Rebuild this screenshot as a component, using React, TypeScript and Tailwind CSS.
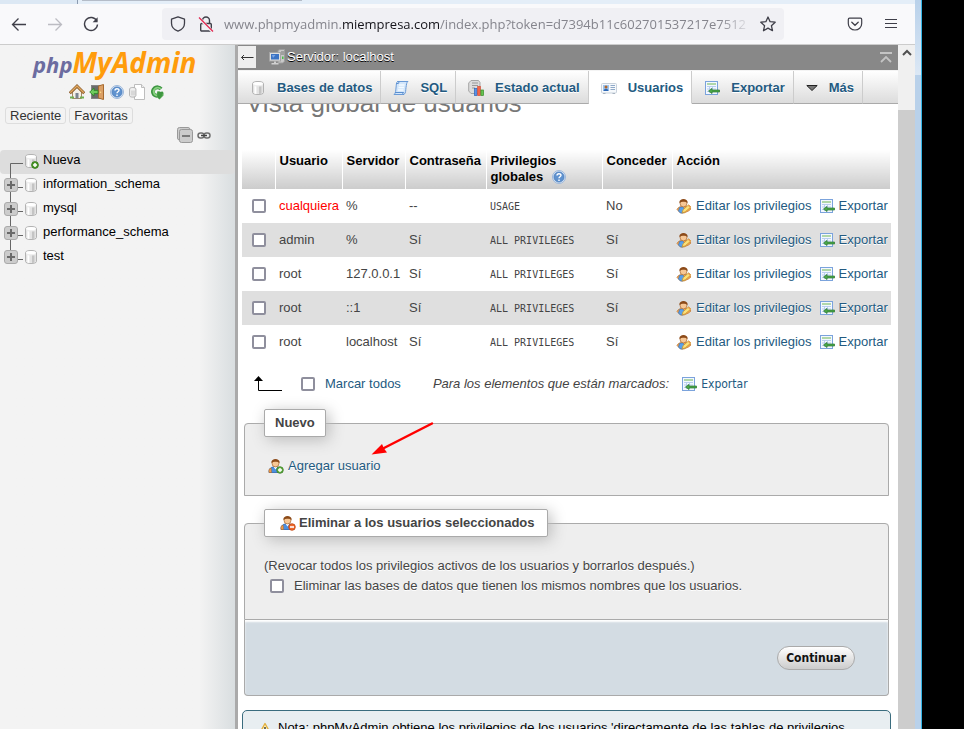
import type { ReactNode } from "react";

const linkClass = "text-[#235a81] no-underline hover:underline [text-shadow:0_1px_0_#fff]";
const checkboxClass =
  "h-[14px] w-[14px] shrink-0 appearance-none rounded-[2px] border-2 border-[#8f8f9d] bg-white checked:bg-[#0061e0]";

function Svg({ children, size = "h-4 w-4", box = "0 0 16 16" }: { children: ReactNode; size?: string; box?: string }) {
  return (
    <svg className={`${size} block shrink-0`} viewBox={box} fill="none" aria-hidden="true">
      {children}
    </svg>
  );
}

function DatabaseIcon({ add = false }: { add?: boolean }) {
  return (
    <Svg>
      <path d="M2.5 3.5C2.5 .8 13.5.8 13.5 3.5v9c0 2.7-11 2.7-11 0z" fill="#efefef" stroke="#b2b2b2" />
      <path d="M3 5.2c2 1.5 8 1.5 10 0v7.3c-2 1.7-8 1.7-10 0z" fill="#e3e3e3" />
      <path d="M9 6.4h2.4v7.3L9 14z" fill="#c4c4c4" />
      <path d="M4.4 6.1l2 .4v7.4l-2-.5z" fill="#fff" />
      <ellipse cx="8" cy="3.6" rx="4.8" ry="1.5" fill="#fff" />
      {add && (
        <>
          <circle cx="12" cy="12" r="3.4" fill="#4c9a2a" stroke="#2f7514" strokeWidth=".8" />
          <path d="M12 10v4M10 12h4" stroke="#fff" strokeWidth="1.5" />
        </>
      )}
    </Svg>
  );
}

function HomeIcon() {
  return (
    <Svg>
      <path d="M3.5 8L8 3.5 12.5 8v6.5h-9z" fill="#f4efe6" stroke="#a58a63" />
      <path d="M.8 9.2L8 2l7.2 7.2" stroke="#8a5a2a" strokeWidth="2.8" />
      <path d="M1.2 8.8L8 2.1l6.800 6.700" stroke="#e0a860" strokeWidth="1.400" />
      <rect x="6.500" y="9" width="3" height="5.500" fill="#7b8490" />
      <path d="M1 13.500h4M11 13.500h4" stroke="#6fae52" strokeWidth="2" />
    </Svg>
  );
}

function ExitIcon() {
  return (
    <Svg>
      <rect x="2.5" y="1.5" width="9" height="13" fill="#6b6b6b" stroke="#858585" />
      <path d="M9.5 2l5-1.5v15l-5-1.5z" fill="#dba066" stroke="#a66a30" />
      <circle cx="11.500" cy="8.300" r=".8" fill="#ffe08a" />
      <path d="M.7 8L5 4v2.400h4v3.200H5V12z" fill="#6fcb5e" stroke="#2f8a2a" strokeWidth=".9" />
    </Svg>
  );
}

function HelpIcon() {
  return (
    <Svg>
      <circle cx="8" cy="8" r="6.500" fill="#d5e3f5" stroke="#9db8da" />
      <circle cx="8" cy="8" r="5" fill="#5f92cf" stroke="#4a7dbd" strokeWidth=".8" />
      <path d="M6 6.600c0-2.600 4-2.400 4-.3C10 7.800 8 7.800 8 9.200M8 10.400v1.500" stroke="#fff" strokeWidth="1.400" />
    </Svg>
  );
}

function DocsIcon() {
  return (
    <Svg>
      <path d="M5.5.5h7l3 3v12h-10z" fill="#fff" stroke="#bdbdbd" />
      <path d="M12.5.5v3h3" fill="#eee" stroke="#bdbdbd" />
      <path d="M.6 5c0-2 6.3-2 6.3 0v6.6c0 2-6.300 2-6.300 0z" fill="#f0f0f0" stroke="#b0b0b0" />
      <path d="M3 6.500v5M5 6.500v5" stroke="#c0c0c0" />
    </Svg>
  );
}

function RefreshIcon() {
  return (
    <Svg>
      <path d="M12 5C10.500 3 7.500 2.600 5.500 4.300 2.500 7 4 12.200 8.600 11.700" stroke="#3c9440" strokeWidth="3.800" />
      <path d="M11.700 4.900C10.300 3.500 7.700 3.200 6 4.700 3.500 7 4.700 11.600 8.600 11.500" stroke="#86d07e" strokeWidth="1.900" />
      <path d="M8.200 7.200h2.600v1.400h3.700v2.900l-4 4-2.300-2.300z" fill="#55ab50" />
      <path d="M8.300 8.200l5.400-.8.600 1.800-1.400 1v1.600l-2.600 3.400-2-2.400z" fill="#3f9640" />
    </Svg>
  );
}

function SqlIcon() {
  return (
    <Svg>
      <path d="M4.500 1.500h10.500c-1.600 1-1.400 3-2 6-.5 3 .2 5-2 7H1c2-1.300 1.600-4 2-6.500.4-3 .1-5.500 1.500-6.500z" fill="#d3e6fa" stroke="#6a9ad6" />
      <path d="M4.500 1.500c1.800.2 1.500 2 .9 2h-2M11 14.500c-1.600-.2-1.600-2-.4-2H2" stroke="#5b8fd0" />
      <path d="M6 5h5.500M5.500 7.500H11M5 10h5.500" stroke="#f4faff" strokeWidth="1.600" />
    </Svg>
  );
}

function StatusIcon() {
  return (
    <Svg>
      <path d="M3 .5h7.500l1.500 2v11H3L.7 11V3z" fill="#dcdcdc" stroke="#a5a5a5" />
      <path d="M4 3h6M4 5.500h6M4 8h3" stroke="#999" />
      <rect x="6.500" y="8.500" width="2.600" height="7" fill="#5c93e6" stroke="#2c63b8" strokeWidth=".7" />
      <rect x="9.700" y="6.500" width="2.600" height="9" fill="#f4674a" stroke="#d84a30" strokeWidth=".7" />
      <rect x="12.900" y="10" width="2.600" height="5.500" fill="#65c450" stroke="#378b28" strokeWidth=".7" />
    </Svg>
  );
}

function CardIcon() {
  return (
    <Svg>
      <rect x=".5" y="3.500" width="15" height="9.500" rx="1" fill="#f6f9fc" stroke="#c9d2dc" />
      <rect x="2" y="5" width="6" height="6" fill="#9cc4ee" />
      <circle cx="5" cy="7" r="1.500" fill="#b0672c" />
      <path d="M2.600 11c.4-3 4.400-3 4.800 0z" fill="#2d67b4" />
      <path d="M9.500 5.500h4.500M9.500 7.500h4.500M9.500 9.500h4.500" stroke="#8fa9c8" />
      <path d="M2 13.500h2.500M11.500 13.500H14" stroke="#aab5c2" />
    </Svg>
  );
}

function ExportIcon() {
  return (
    <Svg>
      <rect x="1.500" y="1.500" width="12" height="13" fill="#f3f8ff" stroke="#7ba3dc" />
      <path d="M3 4h9" stroke="#93c985" strokeWidth="1.400" />
      <path d="M3 6.500h9M3 9h9M3 11.500h9M5.500 6v7M8.500 6v7" stroke="#b9cfee" />
      <path d="M4.500 11l3.500-2.600V10h7.500v2H8v1.600z" fill="#4aa648" stroke="#2c7a30" strokeWidth=".7" />
    </Svg>
  );
}

function ServerIcon() {
  return (
    <Svg>
      <path d="M9 1.500l2-1h4.500v12l-2 1.500H9z" fill="#c9c9c9" stroke="#9d9d9d" />
      <path d="M12 3h3M12 5h3" stroke="#777" />
      <rect x="13" y="7.500" width="1.500" height="2.500" fill="#4bc04a" />
      <rect x=".5" y="3.500" width="11" height="8.500" fill="#e0e0e0" stroke="#a5a5a5" />
      <rect x="2" y="5" width="8" height="5.500" fill="#3c74c4" />
      <path d="M3 6h3.500L4 9z" fill="#7ba7e6" />
      <path d="M5 12.500h2v1.500h2.500v1.500h-7V14H5z" fill="#d0d0d0" />
    </Svg>
  );
}

function UserIcon({ kind }: { kind: "edit" | "add" | "remove" }) {
  return (
    <Svg>
      {kind === "edit" ? (
        <>
          <path d="M1 11.500c1-2.500 3.500-3.200 6.500-3.200s6.500.7 7.500 2.700l-2.500 2L8 15H4.500z" fill="#f5a54e" stroke="#c0762c" strokeWidth=".7" />
          <path d="M3.500 9.600l3-.9 2.500 3-2 3.300H4.500L2.500 13z" fill="#5aa0ea" stroke="#2f6db8" strokeWidth=".6" />
        </>
      ) : (
        <>
          <path d="M1 14.500c-.2-4.500 2.500-5.700 6.500-5.700s6.700 1.200 6.500 5.700z" fill="#4b8fe0" stroke="#2962ae" strokeWidth=".8" />
          <path d="M1 14.500v-3l2-1.500.5 4.500z" fill="#f1a050" stroke="#b56a24" strokeWidth=".6" />
          <path d="M5.500 8.800l2 2.600 2-2.600z" fill="#fff" />
        </>
      )}
      <ellipse cx="7.500" cy="5.700" rx="3.400" ry="3.200" fill="#f7c795" stroke="#a8662c" strokeWidth=".7" />
      <path d="M3.300 5.200C2.700-.3 12.300-.3 11.700 5.200c-1-1-2-1.400-4-1.400-2.200 0-3.400.2-4.400 1.400z" fill="#8c4a18" />
      {kind === "edit" && (
        <>
          <path d="M6 14.800l1.200-3.200 5.500-4.800 2.200 2.200-5.700 4.900z" fill="#fbe07a" stroke="#c9932c" strokeWidth=".8" />
          <path d="M12.300 7.200l2.200 2.200" stroke="#e79a52" strokeWidth="1.300" />
        </>
      )}
      {kind === "add" && (
        <>
          <circle cx="12" cy="12" r="3.300" fill="#63ae45" stroke="#3c7f22" strokeWidth=".8" />
          <path d="M12 10v4M10 12h4" stroke="#fff" strokeWidth="1.400" />
        </>
      )}
      {kind === "remove" && (
        <>
          <circle cx="12" cy="12" r="3.300" fill="#ee6a2c" stroke="#c2440f" strokeWidth=".8" />
          <path d="M10 12h4" stroke="#fff" strokeWidth="1.600" />
        </>
      )}
    </Svg>
  );
}

function BrowserToolbar() {
  return (
    <header className="shrink-0 border-b border-[#cccccc] bg-[#f9f9fb] text-[#3f3f49]">
      <div className="flex h-1 bg-[#e4eef8]">
        <div className="w-[77px] bg-[#dce8f4]" />
        <div className="w-px bg-[#8c9bb0]" />
        <div className="ml-1 h-px w-[220px] bg-[#b4bcc8]" />
      </div>
      <div className="flex h-10 items-center pr-4">
        <div className="flex w-[162px] shrink-0 items-center gap-5 pl-[11px]">
          <button type="button" aria-label="Atrás">
            <Svg>
              <path d="M15 8.500H1.500M7.500 2.500l-6 6 6 6" stroke="currentColor" strokeWidth="1.300" />
            </Svg>
          </button>
          <button type="button" aria-label="Adelante" className="text-[#bcbcc2]">
            <Svg>
              <path d="M1 8.500h13.500M8.500 2.500l6 6-6 6" stroke="currentColor" strokeWidth="1.300" />
            </Svg>
          </button>
          <button type="button" aria-label="Recargar">
            <Svg>
              <path d="M13.800 5A6.500 6.500 0 1 0 14.500 8.500" stroke="currentColor" strokeWidth="1.400" />
              <path d="M14.600 1.200v5H9.600z" fill="currentColor" />
            </Svg>
          </button>
        </div>
        <div className="flex h-8 min-w-0 flex-1 items-center rounded bg-[#f0f0f4] pr-2 pl-2">
          <Svg>
            <path d="M8 .8l6.500 2.400v4c0 4-2.500 6.500-6.500 8-4-1.500-6.500-4-6.500-8v-4z" stroke="currentColor" strokeWidth="1.300" strokeLinejoin="round" />
          </Svg>
          <div className="ml-3">
            <Svg>
              <path d="M4.500 7V4.500a3.500 3.500 0 0 1 7 0V7" stroke="currentColor" strokeWidth="1.400" />
              <rect x="2.700" y="7.500" width="10.600" height="7.500" rx="1" stroke="currentColor" strokeWidth="1.400" />
              <path d="M1 2l14 14" stroke="#f0f0f4" strokeWidth="3" />
              <path d="M1 1.500l14 14" stroke="#e22850" strokeWidth="1.200" />
            </Svg>
          </div>
          <div className="ml-[10px] min-w-0 flex-1 overflow-hidden font-['Open_Sans','Noto_Sans',sans-serif] text-[13px] leading-6 whitespace-nowrap text-[#85858d] [mask-image:linear-gradient(to_left,transparent,black_32px)]">
            www.phpmyadmin.<span className="text-[#15141a]">miempresa.com</span>/index.php?token=d7394b11c602701537217e7512
          </div>
          <button type="button" aria-label="Añadir a marcadores" className="ml-2">
            <Svg>
              <path d="M8 1l2.100 4.700 5.100.5-3.800 3.500 1.100 5L8 12.100l-4.500 2.600 1.100-5L.8 6.200l5.100-.5z" stroke="currentColor" strokeWidth="1.300" strokeLinejoin="round" />
            </Svg>
          </button>
        </div>
        <div className="flex shrink-0 items-center gap-5 pl-[63px]">
          <button type="button" aria-label="Guardar en Pocket">
            <Svg>
              <path d="M2.500 2.200h11c.7 0 1.200.5 1.200 1.200v4C14.700 11.500 11.500 14 8 14S1.300 11.500 1.300 7.400v-4c0-.7.5-1.200 1.200-1.200z" stroke="currentColor" strokeWidth="1.200" />
              <path d="M4.800 6.300L8 9.300l3.200-3" stroke="currentColor" strokeWidth="1.300" strokeLinecap="round" />
            </Svg>
          </button>
          <button type="button" aria-label="Menú">
            <Svg>
              <path d="M2 3.500h12M2 7.500h12M2 11.500h12" stroke="currentColor" strokeWidth="1.100" />
            </Svg>
          </button>
        </div>
      </div>
    </header>
  );
}

function TreeBranch({ first = false, last = false }: { first?: boolean; last?: boolean }) {
  return (
    <Svg size="h-6 w-[23px]" box="0 0 23 24">
      {first ? (
        <path d="M10.500 24V13.500H24" stroke="#666" />
      ) : (
        <>
          <path d={last ? "M10.500 0V12M10.500 13.500H24" : "M10.500 0V24M10.500 13.500H24"} stroke="#666" />
          <rect x="4.500" y="4.500" width="13" height="13" rx="2.500" fill="#ccc" stroke="#aaa" />
          <path d="M11 7v8M7 11h8" stroke="#6a6a6a" strokeWidth="2" />
        </>
      )}
    </Svg>
  );
}

function Sidebar() {
  const databases = ["information_schema", "mysql", "performance_schema", "test"];
  return (
    <aside className="w-[238px] shrink-0 border-r-[3px] border-[#aaaaaa] bg-linear-to-r from-[#f3f3f3] from-85% to-[#d9dee0] pt-1">
      <a href="#inicio" aria-label="phpMyAdmin" className="block h-[34px] pl-[33px] font-['Open_Sans','Noto_Sans',sans-serif] leading-[26px] font-bold whitespace-nowrap italic">
        <span className="text-[22px] text-[#6c6ca0]">php</span>
        <span className="text-[28px] text-[#ff9c0c]">MyAdmin</span>
      </a>
      <nav aria-label="Accesos" className="flex gap-1 pt-[1px] pl-[69px]">
        <a href="#inicio" aria-label="Página de inicio"><HomeIcon /></a>
        <a href="#salir" aria-label="Salir"><ExitIcon /></a>
        <a href="#ayuda" aria-label="Documentación"><HelpIcon /></a>
        <a href="#docs" aria-label="Documentos"><DocsIcon /></a>
        <a href="#recargar" aria-label="Recargar"><RefreshIcon /></a>
      </nav>
      <div className="flex gap-[3px] pt-[7px] pl-[5px] text-[#333]">
        <button type="button" className="h-[17px] rounded-[3px] border border-[#dddddd] px-1 leading-[15px]">Reciente</button>
        <button type="button" className="h-[17px] rounded-[3px] border border-[#dddddd] px-1 leading-[15px]">Favoritas</button>
      </div>
      <div className="flex items-center justify-end gap-1 pt-[3px] pr-6 pb-[7px]">
        <button type="button" aria-label="Contraer todo">
          <Svg>
            <rect x=".5" y=".5" width="12.500" height="12.500" rx="2" fill="#ccc" stroke="#999" />
            <rect x="2.500" y="2.500" width="13" height="13" rx="2" fill="#ccc" stroke="#999" />
            <path d="M5 9h8" stroke="#666" strokeWidth="1.600" />
          </Svg>
        </button>
        <button type="button" aria-label="Enlazar con el panel principal">
          <Svg size="h-4 w-[14px]" box="0 0 14 16">
            <rect x="1" y="6" width="6" height="5" rx="2.500" stroke="#6f6f6f" strokeWidth="1.500" />
            <rect x="7" y="6" width="6" height="5" rx="2.500" stroke="#6f6f6f" strokeWidth="1.500" />
            <path d="M4 8.500h6" stroke="#444" strokeWidth="1.500" />
          </Svg>
        </button>
      </div>
      <ul className="text-black">
        <li className="flex h-6 items-start rounded-sm bg-[#dddddd]">
          <TreeBranch first />
          <div className="pt-[3px]"><DatabaseIcon add /></div>
          <a href="#nueva" className="pl-1 leading-5">Nueva</a>
        </li>
        {databases.map((name, i) => (
          <li key={name} className="flex h-6 items-start">
            <TreeBranch last={i === databases.length - 1} />
            <div className="pt-[3px]"><DatabaseIcon /></div>
            <a href={`#${name}`} className="pl-1 leading-5">{name}</a>
          </li>
        ))}
      </ul>
    </aside>
  );
}

function Tab({ icon, label, active = false }: { icon: ReactNode; label: string; active?: boolean }) {
  return (
    <a
      href={`#${label}`}
      className={`flex shrink-0 items-center gap-[11px] border-r border-b border-r-[#cccccc] pt-[2px] pr-2 pl-3 font-bold whitespace-nowrap text-[#235a81] [text-shadow:0_1px_0_#fff] ${
        active ? "border-b-white bg-white" : "border-b-[#aaaaaa] bg-linear-to-b from-white to-[#dcdcdc]"
      }`}
    >
      {icon}
      {label}
    </a>
  );
}

function MainHeader() {
  return (
    <div className="relative z-10">
      <div className="flex h-[26px] items-center border-b border-[#f4f4f4] bg-[#888888] pb-[2px]">
        <button type="button" aria-label="Ocultar panel" className="flex h-[22px] w-[18px] items-center justify-center bg-[#eeeeee] text-[#333]">
          <Svg size="h-3 w-[14px]" box="0 0 14 12">
            <path d="M13.500 6.500H1.500M4 4L1.500 6.500 4 9" stroke="currentColor" />
          </Svg>
        </button>
        <a href="#servidor" className="flex items-center gap-[2px] pl-[13px] text-white [text-shadow:0_1px_0_#000]">
          <ServerIcon />
          Servidor: localhost
        </a>
        <button type="button" aria-label="Ir arriba" className="mr-1 ml-auto">
          <Svg>
            <path d="M2 4h12M3 13l5-5 5 5" stroke="#c4c4c4" strokeWidth="1.800" />
          </Svg>
        </button>
      </div>
      <nav aria-label="Secciones" className="flex h-[33px]">
        <Tab icon={<DatabaseIcon />} label="Bases de datos" />
        <Tab icon={<SqlIcon />} label="SQL" />
        <Tab icon={<StatusIcon />} label="Estado actual" />
        <Tab icon={<CardIcon />} label="Usuarios" active />
        <Tab icon={<ExportIcon />} label="Exportar" />
        <Tab
          icon={
            <Svg size="h-4 w-3" box="0 0 12 16">
              <path d="M.8 5.500h10.400L6 10.500z" fill="#777" stroke="#222" />
            </Svg>
          }
          label="Más"
        />
        <div className="flex-1 border-b border-[#aaaaaa] bg-linear-to-b from-white to-[#dcdcdc]" />
      </nav>
    </div>
  );
}

const users = [
  { name: "cualquiera", host: "%", password: "--", privileges: "USAGE", grant: "No" },
  { name: "admin", host: "%", password: "Sí", privileges: "ALL PRIVILEGES", grant: "Sí" },
  { name: "root", host: "127.0.0.1", password: "Sí", privileges: "ALL PRIVILEGES", grant: "Sí" },
  { name: "root", host: "::1", password: "Sí", privileges: "ALL PRIVILEGES", grant: "Sí" },
  { name: "root", host: "localhost", password: "Sí", privileges: "ALL PRIVILEGES", grant: "Sí" },
];

const thClass = "border-r border-white pt-[3px] pl-1 align-top";

function UsersTable() {
  return (
    <table className="w-full table-fixed border-collapse text-left leading-4 whitespace-nowrap">
      <colgroup>
        <col className="w-[33px]" />
        <col className="w-[67px]" />
        <col className="w-[63px]" />
        <col className="w-[81px]" />
        <col className="w-[116px]" />
        <col className="w-[70px]" />
        <col />
      </colgroup>
      <thead>
        <tr className="h-[39px] text-black [&>th]:bg-linear-to-b [&>th]:from-white [&>th]:to-[#cccccc]">
          <th className={thClass} aria-label="Seleccionar" />
          <th className={thClass}>Usuario</th>
          <th className={thClass}>Servidor</th>
          <th className={thClass}>Contraseña</th>
          <th className={thClass}>
            Privilegios
            <span className="flex items-center gap-2">
              globales <HelpIcon />
            </span>
          </th>
          <th className={thClass}>Conceder</th>
          <th className={thClass}>Acción</th>
        </tr>
      </thead>
      <tbody>
        {users.map((user, i) => (
          <tr key={i} className="h-[34px] even:bg-[#dfdfdf] [&>td]:pl-1">
            <td>
              <input type="checkbox" aria-label={`Seleccionar ${user.name}`} className={`${checkboxClass} ml-[6px] block`} />
            </td>
            <td className={user.name === "cualquiera" ? "text-[#ff0000]" : ""}>{user.name}</td>
            <td>{user.host}</td>
            <td>{user.password}</td>
            <td className="pt-[2px] font-['DejaVu_Sans_Mono',monospace] text-[10px]">{user.privileges}</td>
            <td>{user.grant}</td>
            <td>
              <div className="flex items-center">
                <a href="#editar" className={`flex items-center gap-1 ${linkClass}`}>
                  <UserIcon kind="edit" />
                  Editar los privilegios
                </a>
                <a href="#exportar" className={`ml-[7px] flex items-center gap-1 ${linkClass}`}>
                  <ExportIcon />
                  Exportar
                </a>
              </div>
            </td>
          </tr>
        ))}
      </tbody>
    </table>
  );
}

const legendClass = "ml-[19px] border border-[#aaaaaa] bg-white px-[10px] font-bold rounded-[2px] shadow-[3px_3px_15px_#bbbbbb]";
const fieldsetClass = "rounded-t border border-[#aaaaaa] bg-[#eeeeee] [text-shadow:0_1px_0_#fff]";

function MainPanel() {
  return (
    <main className="relative min-w-0 flex-1 overflow-hidden bg-white">
      <MainHeader />
      <div className="pr-[7px] pl-1">
        <h2 className="-mt-4 pl-1 text-[26px] leading-[30px] text-[#777777]">Vista global de usuarios</h2>
        <div className="pt-8">
          <UsersTable />
        </div>
        <div className="flex h-[50px] items-center whitespace-nowrap">
          <div className="ml-3">
            <Svg size="h-4 w-7" box="0 0 28 16">
              <path d="M4.500 3v11.500H28" stroke="#000" />
              <path d="M4.500 0L9 5H0z" fill="#000" />
            </Svg>
          </div>
          <label className={`ml-[19px] flex items-center gap-[10px] ${linkClass}`}>
            <input type="checkbox" className={checkboxClass} />
            Marcar todos
          </label>
          <em className="ml-8">Para los elementos que están marcados:</em>
          <button type="button" className={`ml-3 flex items-center gap-1 font-['DejaVu_Sans_Condensed','Noto_Sans',sans-serif] text-[12px] ${linkClass}`}>
            <ExportIcon />
            Exportar
          </button>
        </div>

        <div className="pr-[2px] pl-[2px]">
          <fieldset className={fieldsetClass}>
            <legend className={`${legendClass} h-7 leading-[26px]`}>Nuevo</legend>
            <a href="#agregar" className={`mt-5 mb-5 ml-[23px] inline-flex items-center gap-1 ${linkClass}`}>
              <UserIcon kind="add" />
              Agregar usuario
            </a>
          </fieldset>

          <fieldset className={`mt-[13px] ${fieldsetClass}`}>
            <legend className={`${legendClass} h-7 leading-[26px]`}>
              <span className="flex items-center gap-[3px] pr-[2px] pl-[5px]">
                <UserIcon kind="remove" />
                Eliminar a los usuarios seleccionados
              </span>
            </legend>
            <div className="pt-[19px] pb-[23px] pl-[19px] leading-5">
              <p>(Revocar todos los privilegios activos de los usuarios y borrarlos después.)</p>
              <label className="flex items-center gap-[10px] pl-[6px]">
                <input type="checkbox" className={checkboxClass} />
                Eliminar las bases de datos que tienen los mismos nombres que los usuarios.
              </label>
            </div>
          </fieldset>
          <div className="flex h-[76px] items-center justify-end rounded-b border border-t-0 border-[#aaaaaa] bg-[#d3dce3] pr-[33px] shadow-[inset_0_2px_2px_#ffffff]">
            <button
              type="button"
              className="h-6 rounded-xl border border-[#aaaaaa] bg-linear-to-b from-white to-[#cccccc] px-2 font-['DejaVu_Sans_Condensed','Noto_Sans',sans-serif] text-[12px] font-bold text-[#111]"
            >
              Continuar
            </button>
          </div>
        </div>

        <div className="mt-[14px] flex gap-1 rounded-[5px] border border-[#3a6c7e] bg-[#e8eef1] pt-[8px] pb-5 pl-[15px] text-black">
          <div className="pt-[2px]">
            <Svg>
              <path d="M7 2.500L13.300 14H.7z" fill="#fff4c2" stroke="#e2b040" strokeWidth="1.400" strokeLinejoin="round" />
              <path d="M7 6v4M7 11v1.500" stroke="#333" strokeWidth="1.400" />
            </Svg>
          </div>
          <p className="whitespace-nowrap">Nota: phpMyAdmin obtiene los privilegios de los usuarios 'directamente de las tablas de privilegios</p>
        </div>
      </div>
      <svg className="pointer-events-none absolute top-[376px] left-[132px] h-9 w-16" viewBox="0 0 64 36" fill="none" aria-hidden="true">
        <path d="M62 2.500L14 27" stroke="#ff0000" strokeWidth="2.500" strokeLinecap="round" />
        <path d="M1.500 33.500L12 23l2 4.500 3 4z" fill="#ff0000" />
      </svg>
    </main>
  );
}

function Scrollbar() {
  return (
    <div aria-hidden="true" className="flex w-[17px] shrink-0 flex-col bg-[#f0f0f0]">
      <div className="flex h-[65px] justify-center pt-[1px]">
        <Svg>
          <path d="M4 9l4-4 4 4" stroke="#505050" strokeWidth="2" />
        </Svg>
      </div>
      <div className="flex-1 bg-[#cdcdcd]" />
    </div>
  );
}

export default function App() {
  return (
    <div className="flex h-screen overflow-hidden bg-black font-['Liberation_Sans',Arial,sans-serif] text-[13px] leading-[18px] text-[#444444]">
      <div className="flex min-w-0 flex-1 flex-col">
        <BrowserToolbar />
        <div className="flex min-h-0 flex-1">
          <Sidebar />
          <MainPanel />
          <Scrollbar />
        </div>
      </div>
      <div className="flex w-[7px] shrink-0 flex-col border-r border-[#35b5e5] bg-[#b9d1ea]">
        <div className="h-[75px] bg-linear-to-b from-[#b9d1ea] to-[#dce8f5]" />
      </div>
      <div className="w-[42px] shrink-0 bg-black" />
    </div>
  );
}
